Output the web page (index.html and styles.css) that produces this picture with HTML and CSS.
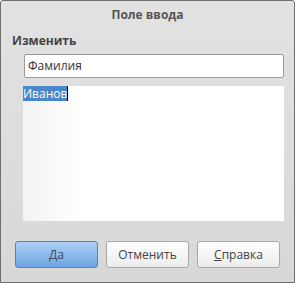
FILE: index.html
```html
<!DOCTYPE html>
<html lang="ru">
<head>
  <meta charset="UTF-8">
  <title>Поле ввода</title>
  <link rel="stylesheet" href="styles.css">
</head>
<body>
  <div class="dialog">
    <div class="title">Поле ввода</div>
    <div class="label">Изменить</div>
    <div class="field">Фамилия</div>
    <div class="area"><span class="sel">Иванов</span><span class="caret"></span></div>
    <div class="buttons">
      <button class="btn primary">Да</button>
      <button class="btn">Отменить</button>
      <button class="btn"><u>С</u>правка</button>
    </div>
  </div>
</body>
</html>
```

FILE: styles.css
```css
html, body {
  margin: 0;
  padding: 0;
}
body {
  font-family: "Open Sans", "Noto Sans", sans-serif;
  font-size: 12px;
  color: #3c3c3c;
}
.dialog {
  box-sizing: border-box;
  width: 295px;
  height: 283px;
  border: 1px solid #6e6e6e;
  border-radius: 3px 3px 0 0;
  background: linear-gradient(#e2e2e2, #d8d8d8);
  display: flex;
  flex-direction: column;
}
.title {
  text-align: center;
  font-weight: bold;
  color: #555;
  height: 28px;
  line-height: 28px;
}
.label {
  font-weight: bold;
  font-size: 12px;
  color: #444;
  padding-left: 11px;
  height: 24px;
  line-height: 24px;
}
.field {
  margin: 1px 10px 0 23px;
  height: 22px;
  line-height: 22px;
  border: 1px solid #9a9a9a;
  border-radius: 2px;
  background: #fff;
  padding-left: 3px;
  color: #333;
}
.area {
  margin: 8px 10px 0 22px;
  height: 135px;
  background: linear-gradient(90deg, #f3f3f3, #fff 22%);
  display: flex;
  align-items: flex-start;
}
.sel {
  background: #4a86c8;
  color: #fff;
  height: 15px;
  line-height: 15px;
}
.caret {
  width: 1px;
  height: 15px;
  background: #000;
}
.buttons {
  display: flex;
  gap: 8px;
  margin: 20px 0 0 14px;
}
.btn {
  box-sizing: border-box;
  width: 83px;
  height: 27px;
  font-family: inherit;
  font-size: 12px;
  color: #444;
  border: 1px solid #a8a8a8;
  border-radius: 3px;
  background: linear-gradient(#ffffff, #ececec);
}
.btn.primary {
  border-color: #5a82b4;
  color: #3a4a60;
  background: linear-gradient(#acd0f4, #6ea4e2);
}
```
